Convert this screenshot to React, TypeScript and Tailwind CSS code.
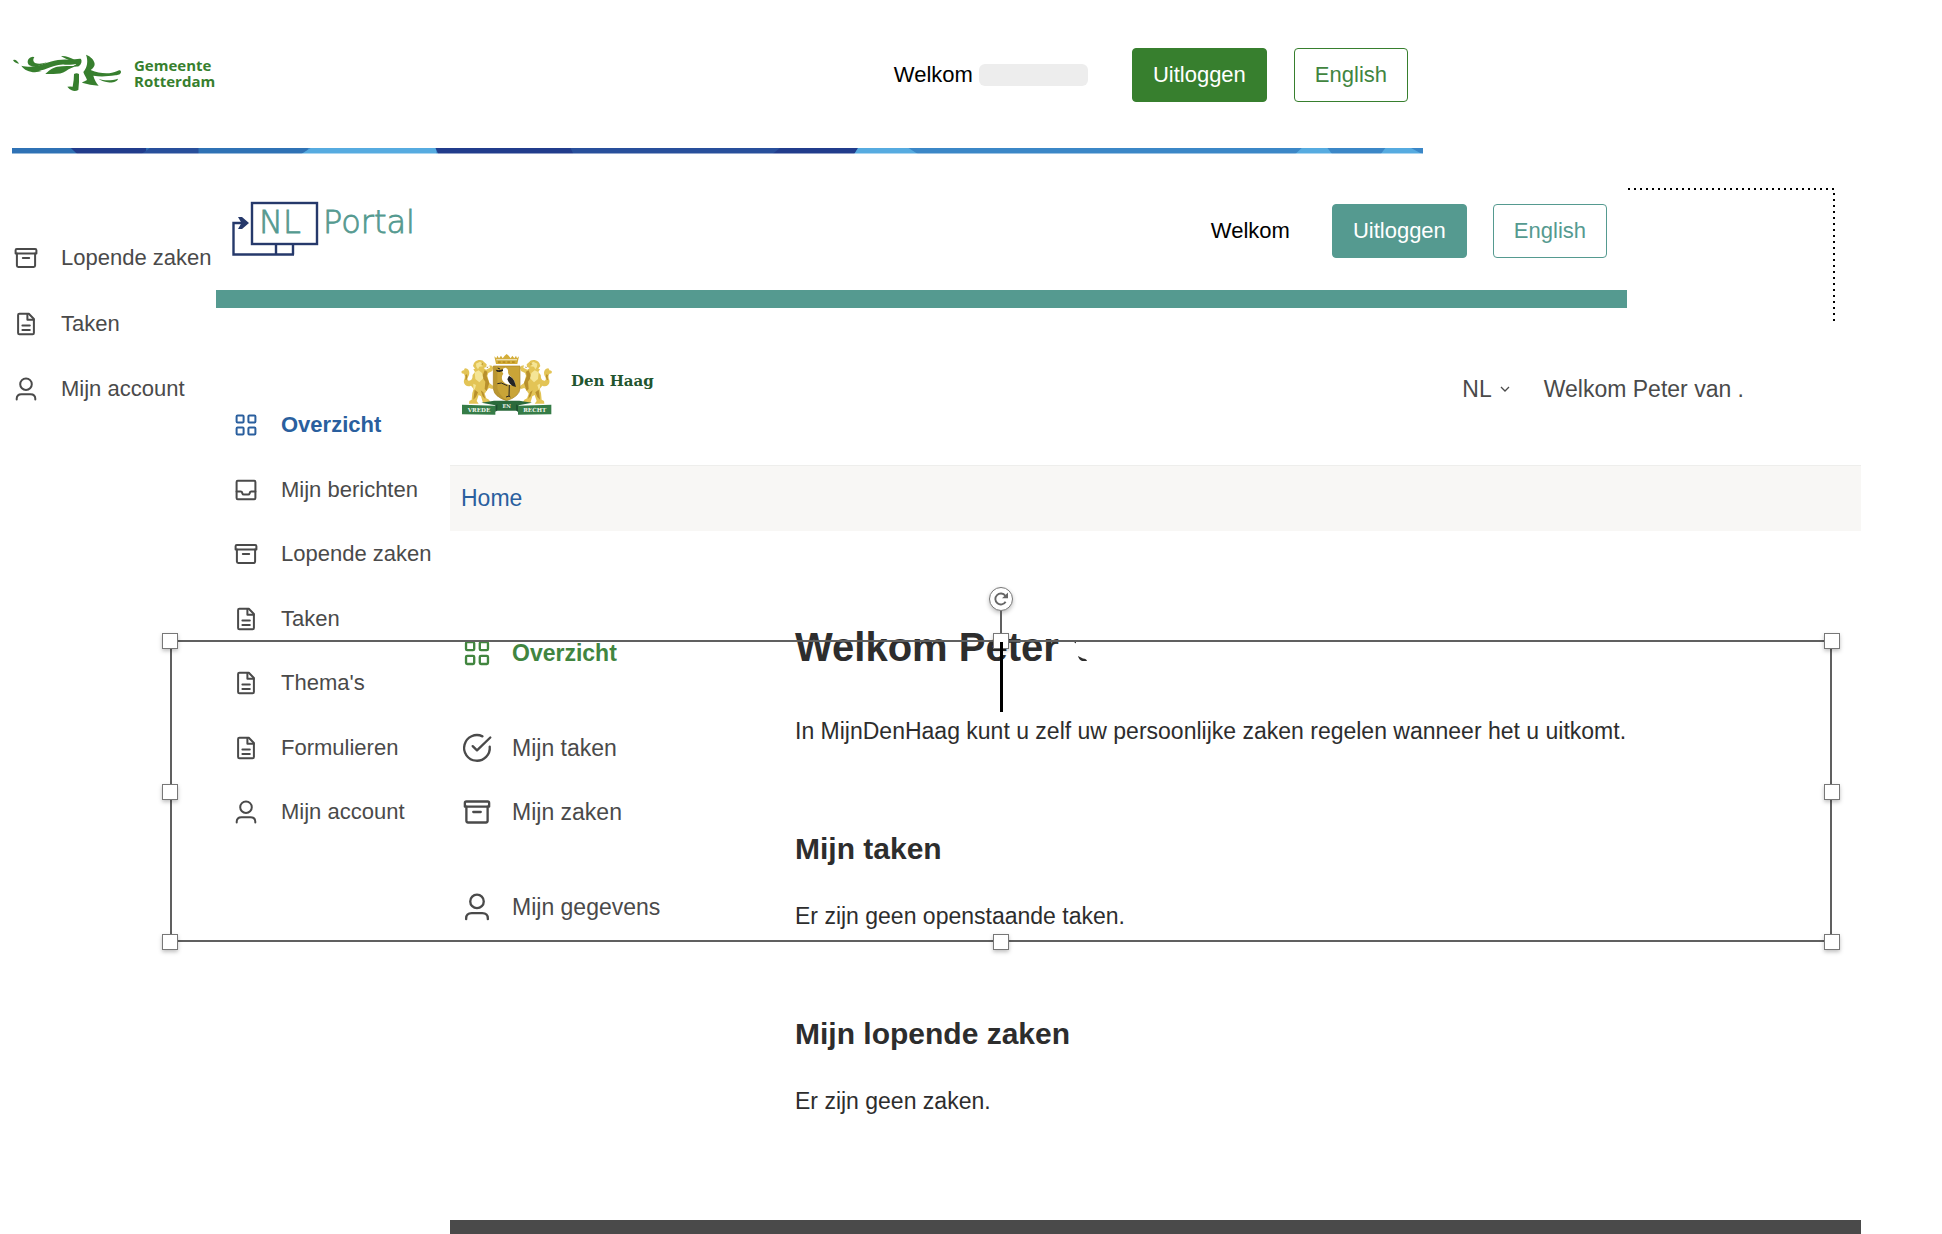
import type { ReactNode } from "react";

/* ---------- icons ---------- */

function Icon({ size, children }: { size: number; children: ReactNode }) {
  return (
    <svg
      width={size}
      height={size}
      viewBox="0 0 24 24"
      fill="none"
      stroke="currentColor"
      strokeWidth="2"
      strokeLinecap="round"
      strokeLinejoin="round"
      className="shrink-0 overflow-visible"
      aria-hidden="true"
    >
      {children}
    </svg>
  );
}

type IconName = "grid" | "inbox" | "archive" | "file" | "user" | "check";

const shapes: Record<IconName, ReactNode> = {
  grid: (
    <>
      <rect x="2.6" y="2.6" width="7" height="7" rx="1" />
      <rect x="14.4" y="2.6" width="7" height="7" rx="1" />
      <rect x="2.6" y="14.4" width="7" height="7" rx="1" />
      <rect x="14.4" y="14.4" width="7" height="7" rx="1" />
    </>
  ),
  inbox: (
    <>
      <rect x="2.6" y="2.8" width="18.8" height="18.4" rx="1.2" />
      <path d="M2.6 13.4h4.2q1 0 1.3 1l.2 1q.4 1.2 1.5 1.2h4.4q1.1 0 1.5-1.2l.2-1q.3-1 1.3-1h4.2" />
    </>
  ),
  archive: (
    <>
      <path d="M1.6 7.4V4.200q0-1.200 1.200-1.200h18.400q1.200 0 1.200 1.200v3.200z" />
      <path d="M2.900 7.400v12.200q0 1.400 1.400 1.400h15.400q1.400 0 1.400-1.400V7.400" />
      <path d="M8.800 12h6.400" />
    </>
  ),
  file: (
    <>
      <path d="M14.8 1.7H5.4q-1.3 0-1.3 1.3v18q0 1.3 1.3 1.3h13.2q1.3 0 1.3-1.3V7z" />
      <path d="M13.4 1.900v5.900h6.300M8.400 13.400h7.400M8.400 17.900h7.400" />
    </>
  ),
  user: (
    <>
      <circle cx="12" cy="7.2" r="5.8" />
      <path d="M2.700 22.400v-.6q0-4.600 4.800-4.600h9q4.800 0 4.800 4.600v.6" />
    </>
  ),
  check: (
    <>
      <path d="M22.900 10.800A11 11 0 1 1 16.700 2" />
      <path d="M8.300 10.400l3.700 3.600L23.400 3" />
    </>
  ),
};

/* ---------- logos ---------- */

function RotterdamLogo() {
  return (
    <a href="#rotterdam" className="flex items-center gap-3 pb-1 text-[#377f2e]">
      <svg width="110" height="38" viewBox="36 72 330 114" fill="currentColor" aria-hidden="true">
        <path d="M39 90q7-2 11 2 5 4 7 9-13-1-18-11z" />
        <path d="M64 107c8 2 18 3 27 3 22-1 40-9 60-15 24-6 46-9 66-4 7 2 13 6 20 10-14 1-28 4-42 3-22-2-38 6-56 12-8 3-14 5-22 5l8 2c-22 8-50 2-61-16z" />
        <path d="M86 104c-6-8-2-19 7-22 4-2 8-2 10 0-5 6-4 13 2 17 10 4 24 2 36-2-14 10-42 18-55 7z" />
        <path d="M183 78c14-1 26 4 36 9 8 3 17-2 24 0 4 7 1 16-7 22-5 2-10 0-15-2l8-4c-14-12-30-14-46-25z" />
        <path d="M136 132c8-8 20-19 36-22 18-3 40-2 60-3-12 4-24 8-34 16-16 12-36 8-62 9z" />
        <path d="M258 74c14 5 25 16 26 28 0 8-5 13-12 18 28 11 56 14 80 3 6-4 11-2 11 3-1 8-9 9-17 10-24 3-44 5-66 1 3 11 8 21 16 30-18-2-34-4-50-9 2-2 10-5 15-8-2-8-9-16-11-24 12-14 15-33 8-52z" />
        <path d="M296 146c16 6 38 6 58 0-2 9-16 13-30 11-12-2-22-6-28-11z" />
        <path d="M222 132q8-4 15 0 1 22-2 48-10 5-20 1-8-4-13-11 9-1 16 0 4-18 4-38z" />
      </svg>
      <span className="font-['Open_Sans'] text-[15px] leading-4 font-bold">
        Gemeente
        <br />
        Rotterdam
      </span>
    </a>
  );
}

function PortalLogo() {
  return (
    <a href="#nl-portal" aria-label="NL Portal">
      <svg width="206" height="56" viewBox="0 0 206 56" fill="none" className="overflow-visible">
        <g stroke="#26396b" strokeWidth="2.4">
          <rect x="20" y="3" width="65" height="41" />
          <path d="M44 44v10.500M61 44v10.500" />
          <path d="M62 54.500H1.500V23h13" />
        </g>
        <path d="M6 17h4l7 6-7 6H6l3.500-6z" fill="#26396b" />
        <g
          fill="#559a90"
          stroke="#559a90"
          strokeWidth="0.800"
          fontSize="32"
          className="font-['DejaVu_Sans'] font-extralight"
        >
          <text x="27" y="33">NL</text>
          <text x="91" y="33">Portal</text>
        </g>
      </svg>
    </a>
  );
}

function Lion() {
  return (
    <g>
      <path
        fill="#e3c456"
        d="M100 76q2-12 16-15 12-2 17 7l7 6-1 8-8 3 7 5 12-6-2-7q9 0 12 7l-3 10-12 6-3 8 6 22 11 8q3 7-2 10l-10-3-5 5-8 12 5 14 8 4 6 10h-24l-6-20-7-4-6 18 6 8H87l1-8 7-4 2-20 4-12-8-10q-10 4-17-2-8-8-2-20 2-8-2-14-8 1-8-6 3-6 9-4-3-5 3-6 12 2 12 14 0 8-5 14-2 8 4 9 8 0 10-8 0-12 8-18l-5-8 5-2-6-8z"
      />
      <path
        fill="#b8902c"
        d="M134 92l8 4-2 14 8 20-8 24-6-6 2-22-10-14zM104 150l10 8-6 14-8 8zM122 152l8 6 6 20-8-8zM76 106l5-2q4 10-2 18l-3-2q3-6 0-14z"
      />
      <path
        fill="#f5e596"
        d="M108 72l12-6 8 6-7 2 8 6-11 1-4 8-5-8zM104 98l12-6 10 8 4 16-12 12-12-10zM100 132l8 4-4 14-4-6z"
      />
      <path fill="#8a6a22" d="M125 71l4 1-2 3zM140 82l6-1-5 4z" />
    </g>
  );
}

function DenHaagLogo() {
  return (
    <a href="#den-haag" className="flex items-start gap-[19px]">
      <svg width="91" height="62" viewBox="63 40 273 186" aria-hidden="true">
        <Lion />
        <g transform="translate(400 0) scale(-1 1)">
          <Lion />
        </g>
        <path
          fill="#d3ad38"
          d="M163 50l6 6 3-8 5 8 6-8 5 8 6-8 6-5 6 5 6 8 5-8 6 8 5-8 3 8 6-6-5 23h-64z"
        />
        <path fill="#fff" d="M169 58h62v4h-62z" opacity="0.600" />
        <path fill="#b98f22" d="M174 65h8v5h-8zM188 65h8v5h-8zM202 65h8v5h-8zM216 65h8v5h-8z" />
        <path
          fill="#c9a437"
          stroke="#a8842a"
          strokeWidth="2"
          d="M160 79h80v68q-2 24-40 36-38-12-40-36z"
        />
        <path fill="#ab8729" d="M160 79l12 6v60q4 20 28 38-38-12-40-36z" opacity="0.500" />
        <path fill="#fff" d="M187 92q2-9 10-8 9 3 7 14 0 8 12 16 8 8 9 18l-10 4q-20 0-28-14-4-12 3-20-4-4-3-10z" />
        <path fill="#242424" d="M189 89l-12 3-10-2 4 6 8 1 10-3zM207 108q12 6 16 16l5 18-10-3q-12-8-16-20z" />
        <path
          fill="none"
          stroke="#242424"
          strokeWidth="3"
          d="M208 136l-1 34M202 138l-18-8-12 2M198 172l9-3 4 3M180 88l-7-3"
        />
        <path fill="#2a6a3b" d="M124 189l38-6h76l38 6-40 8v16h-70v-16z" />
        <path fill="#357c47" d="M66 195l100 3v27l-100-1zM234 198l100-3v29l-100 1z" />
        <path fill="#1d5230" d="M166 198l6-4v18l-6 5zM234 198l-6-4v18l6 5z" />
        <g
          fill="#f3f7ef"
          textAnchor="middle"
          className="font-['DejaVu_Serif'] font-bold"
          fontSize="17"
        >
          <text x="117" y="218">VREDE</text>
          <text x="200" y="204" fontSize="15">EN</text>
          <text x="284" y="218">RECHT</text>
        </g>
      </svg>
      <span className="pt-4 font-['DejaVu_Serif'] text-[15px] leading-6 font-bold text-[#22552f]">
        Den Haag
      </span>
    </a>
  );
}

/* Decorative blue strip below the Rotterdam header */
function RotterdamBand() {
  return (
    <svg
      className="block h-[6px] w-full"
      viewBox="0 0 1536 18"
      preserveAspectRatio="none"
      aria-hidden="true"
    >
      <path fill="#3b87c7" d="M0 0h1536v18H0z" />
      <path fill="#2f72b5" d="M0 0h322v18H0z" />
      <path fill="#213c8c" d="M64 0h82v18H71z" />
      <path fill="#284f9b" d="M150 0h53v18h-62z" />
      <path fill="#56abe0" d="M325 0h137v18H315z" />
      <path fill="#213c8c" d="M461 0h460l-4 18H464z" />
      <path fill="#284f9b" d="M608 0h228l-8 18H611z" />
      <path fill="#56abe0" d="M921 0h55l10 18h-69zM1404 0h28l5 18h-40zM1495 0h28l12 18h-45z" />
      <path fill="#fff" opacity="0.500" d="M0 15h1536v3H0z" />
    </svg>
  );
}

/* ---------- shared parts ---------- */

type NavItem = { label: string; icon: IconName; active?: boolean };

function NavLinks({ items }: { items: NavItem[] }) {
  return (
    <>
      {items.map((item) => (
        <li key={item.label}>
          <a
            href="#"
            aria-current={item.active ? "page" : undefined}
            className="flex items-center gap-[23px] text-[22px] leading-6 whitespace-nowrap text-[#4a4a4a] aria-[current=page]:font-bold aria-[current=page]:text-[#2a5f9e]"
          >
            <Icon size={24}>{shapes[item.icon]}</Icon>
            {item.label}
          </a>
        </li>
      ))}
    </>
  );
}

function HaagLink({ label, icon, active }: NavItem) {
  return (
    <a
      href="#"
      aria-current={active ? "page" : undefined}
      className="flex items-center gap-[21px] text-[23px] leading-7 whitespace-nowrap text-[#4a4a4a] aria-[current=page]:font-bold aria-[current=page]:text-[#41853f]"
    >
      <Icon size={28}>{shapes[icon]}</Icon>
      {label}
    </a>
  );
}

/* ---------- portals ---------- */

function RotterdamPortal() {
  return (
    <section className="absolute top-0 right-[519px] left-3 bg-white">
      <header className="flex items-center justify-between pt-12 pr-[15px] pb-[46px]">
        <RotterdamLogo />
        <div className="flex items-center text-[22px] leading-[26px]">
          <span className="text-black">Welkom</span>
          <span className="ml-[6px] h-[22px] w-[109px] rounded-[6px] bg-[#ededed]" />
          <button className="ml-11 h-[54px] rounded-[4px] border border-[#377f2e] bg-[#377f2e] px-5 text-white">
            Uitloggen
          </button>
          <button className="ml-[27px] h-[54px] rounded-[4px] border border-[#377f2e] bg-white px-5 text-[#41853f]">
            English
          </button>
        </div>
      </header>
      <RotterdamBand />
      <nav aria-label="Rotterdam" className="pt-[92px] pl-[2px]">
        <ul className="flex h-[155px] flex-col justify-between">
          <NavLinks
            items={[
              { label: "Lopende zaken", icon: "archive" },
              { label: "Taken", icon: "file" },
              { label: "Mijn account", icon: "user" },
            ]}
          />
        </ul>
      </nav>
    </section>
  );
}

function NlPortal() {
  return (
    <section className="absolute top-[165px] right-[315px] left-[216px] bg-white">
      <header className="flex items-start justify-between pt-[35px] pr-5 pb-8 pl-4">
        <PortalLogo />
        <div className="flex items-center pt-1 text-[22px] leading-[26px]">
          <span className="text-black">Welkom</span>
          <button className="ml-[42px] h-[54px] rounded-[4px] border border-[#559a90] bg-[#559a90] px-5 text-white">
            Uitloggen
          </button>
          <button className="ml-[26px] h-[54px] rounded-[4px] border border-[#559a90] bg-white px-5 text-[#559a90]">
            English
          </button>
        </div>
      </header>
      <div className="h-[18px] bg-[#559a90]" />
      <nav aria-label="NL Portal" className="pt-[105px] pl-[18px]">
        <ul className="flex h-[411px] flex-col justify-between">
          <NavLinks
            items={[
              { label: "Overzicht", icon: "grid", active: true },
              { label: "Mijn berichten", icon: "inbox" },
              { label: "Lopende zaken", icon: "archive" },
              { label: "Taken", icon: "file" },
              { label: "Thema's", icon: "file" },
              { label: "Formulieren", icon: "file" },
              { label: "Mijn account", icon: "user" },
            ]}
          />
        </ul>
      </nav>
    </section>
  );
}

function DenHaagPortal() {
  return (
    <section className="relative mt-[322px] mr-[81px] ml-[450px] bg-white text-[23px] leading-8 text-[#2d2d2d]">
      <header className="flex items-center justify-between pt-[31px] pr-[117px] pb-[50px] pl-[11px]">
        <DenHaagLogo />
        <div className="flex items-center gap-[34px] pt-2.5 text-[#4a4a4a]">
          <div className="flex items-center gap-2">
            <select
              aria-label="Taal"
              defaultValue="NL"
              className="field-sizing-content appearance-none bg-transparent"
            >
              <option>NL</option>
              <option>EN</option>
            </select>
            <svg width="10" height="6" viewBox="0 0 10 6" fill="none" stroke="currentColor" strokeWidth="1.300" aria-hidden="true">
              <path d="M1 1l4 4 4-4" />
            </svg>
          </div>
          <span>Welkom Peter van .</span>
        </div>
      </header>
      <nav aria-label="Kruimelpad" className="border-t border-[#eeeeec] bg-[#f8f7f5] pt-4 pb-[17px] pl-[11px]">
        <a href="#" className="text-[#2a5f9e]">
          Home
        </a>
      </nav>
      <div className="flex pb-[103px]">
        <nav aria-label="Den Haag" className="w-[345px] shrink-0 pt-[108px] pl-[13px]">
          <ul className="flex flex-col gap-[67px]">
            <li>
              <HaagLink label="Overzicht" icon="grid" active />
            </li>
            <li>
              <ul className="flex flex-col gap-9">
                <li>
                  <HaagLink label="Mijn taken" icon="check" />
                </li>
                <li>
                  <HaagLink label="Mijn zaken" icon="archive" />
                </li>
              </ul>
            </li>
            <li>
              <HaagLink label="Mijn gegevens" icon="user" />
            </li>
          </ul>
        </nav>
        <main className="min-w-0 grow pt-[92px]">
          <h1 className="flex items-end gap-[14px] text-[40px] leading-[48px] font-bold">
            Welkom Peter
            <svg width="16" height="29" viewBox="0 0 16 29" fill="currentColor" aria-hidden="true">
              <path d="M1 0h2v1.500zM5 14l5 2.500q3.500 0 4 2.500h-5q-3-1-4-5z" />
            </svg>
          </h1>
          <p className="mt-11">
            In MijnDenHaag kunt u zelf uw persoonlijke zaken regelen wanneer het u uitkomt.
          </p>
          <h2 className="mt-[82px] text-[30px] leading-10 font-bold">Mijn taken</h2>
          <p className="mt-[31px]">Er zijn geen openstaande taken.</p>
          <h2 className="mt-[82px] text-[30px] leading-10 font-bold">Mijn lopende zaken</h2>
          <p className="mt-[31px]">Er zijn geen zaken.</p>
        </main>
      </div>
      <footer className="h-[14px] bg-[#4a4a4a]" />
    </section>
  );
}

/* ---------- canvas annotations ---------- */

function Handle() {
  return <span className="size-4 border border-[#777] bg-white shadow-[0_2px_4px_rgba(0,0,0,0.25)]" />;
}

function HandleRow() {
  return (
    <div className="flex justify-between">
      <Handle />
      <Handle />
      <Handle />
    </div>
  );
}

function Selection() {
  return (
    <div className="pointer-events-none absolute top-[633px] right-[102px] left-[162px] h-[317px]">
      <div className="absolute top-[7px] right-2 bottom-2 left-2 border-2 border-[#606060]" />
      <div className="relative flex h-full flex-col justify-between">
        <HandleRow />
        <div className="flex justify-between">
          <Handle />
          <Handle />
        </div>
        <HandleRow />
      </div>
      <div className="absolute inset-x-0 bottom-full flex flex-col items-center">
        <span className="flex size-6 items-center justify-center rounded-full border border-[#777] bg-white shadow-[0_2px_4px_rgba(0,0,0,0.25)]">
          <svg width="16" height="16" viewBox="0 0 16 16" aria-hidden="true">
            <path d="M12.600 10.800a5.500 5.500 0 1 1-.3-6" fill="none" stroke="#666" strokeWidth="1.900" />
            <path d="M15 1.500v5.800H9z" fill="#666" />
          </svg>
        </span>
        <span className="h-[22px] w-[2px] bg-[#606060]" />
      </div>
      <div className="absolute inset-x-0 top-[9px] flex justify-center">
        <span className="h-[70px] w-[3px] bg-black" />
      </div>
    </div>
  );
}

function DottedConnector() {
  return (
    <svg
      className="absolute top-[188px] right-[107px]"
      width="208"
      height="136"
      fill="none"
      stroke="#000"
      strokeWidth="2"
      strokeDasharray="2 4"
      aria-hidden="true"
    >
      <path d="M1 1h206M207 5v129" />
    </svg>
  );
}

export default function App() {
  return (
    <div className="relative flow-root min-h-screen overflow-hidden bg-white font-['Liberation_Sans',Arial,sans-serif]">
      <DottedConnector />
      <RotterdamPortal />
      <NlPortal />
      <DenHaagPortal />
      <Selection />
    </div>
  );
}
